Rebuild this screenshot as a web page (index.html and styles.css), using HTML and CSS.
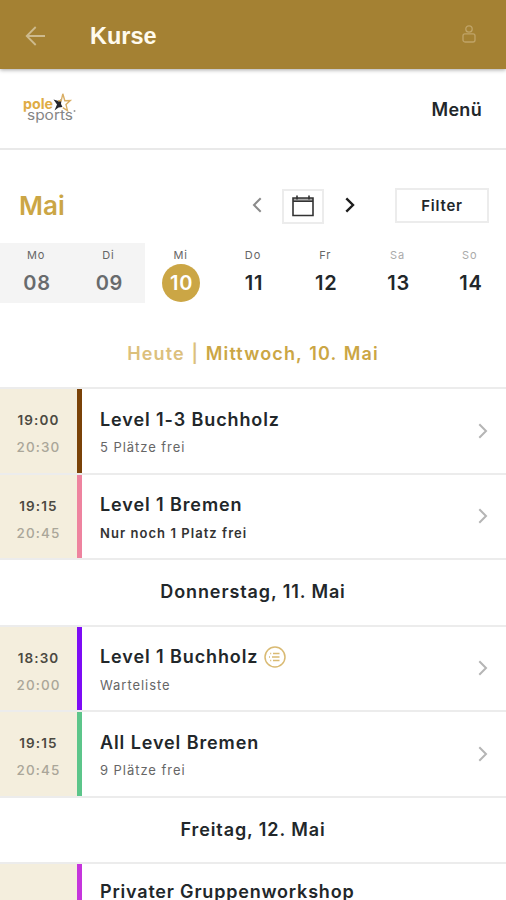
FILE: index.html
```html
<!DOCTYPE html>
<html lang="de">
<head>
    <meta charset="UTF-8">
    <meta name="viewport" content="width=device-width, initial-scale=1.0">
    <title>Kurse</title>
    <link rel="stylesheet" href="styles.css">
</head>
<body>
    <header class="app-bar">
        <svg class="back-icon" viewBox="0 0 20 20"><path d="M19.5 10H1.2M10.2 1L1.2 10l9 9"/></svg>
        <h1>Kurse</h1>
        <svg class="user-icon" viewBox="0 0 14 18"><circle cx="7" cy="4" r="3.2"/><rect x="1" y="8.8" width="12" height="8.2" rx="2"/></svg>
    </header>

    <div class="brand-bar">
        <svg class="logo" viewBox="0 0 54 34">
            <text class="logo-pole" x="0" y="17" textLength="30" lengthAdjust="spacingAndGlyphs">pole</text>
            <path class="star-dark" d="M30.500 7.500l5 1.500 3-2-.500 5 1.500 3-4 .5-4 3 2.500-6z"/>
            <path class="star-gold" d="M35 8.800h3.200l1.600-7 2 7 5.500-.2-4.300 4 1.500 6-4.700-3"/>
            <text class="logo-sports" x="4" y="28" textLength="46" lengthAdjust="spacingAndGlyphs">sports</text>
            <circle class="logo-mark" cx="51.5" cy="19" r="1"/>
        </svg>
        <span class="menu">Menü</span>
    </div>

    <div class="toolbar">
        <h2>Mai</h2>
        <svg class="nav-arrow prev" viewBox="0 0 10 16"><path d="M8.700 1.300L2 8l6.700 6.700"/></svg>
        <div class="calendar-btn">
            <svg viewBox="0 0 22 22"><path class="cal-bar" d="M1 3h20v3H1z"/><path d="M1 3h20v17.500H1zM1 6.300h20M5 .5v4M17 .5v4"/></svg>
        </div>
        <svg class="nav-arrow next" viewBox="0 0 10 16"><path d="M1.300 1.300L8 8l-6.700 6.700"/></svg>
        <div class="filter-btn">Filter</div>
    </div>

    <div class="week">
        <div class="day past"><span>Mo</span><b>08</b></div>
        <div class="day past"><span>Di</span><b>09</b></div>
        <div class="day today"><span>Mi</span><b>10</b></div>
        <div class="day"><span>Do</span><b>11</b></div>
        <div class="day"><span>Fr</span><b>12</b></div>
        <div class="day weekend"><span>Sa</span><b>13</b></div>
        <div class="day weekend"><span>So</span><b>14</b></div>
    </div>

    <h3 class="date-heading current"><span>Heute |</span> Mittwoch, 10. Mai</h3>
    <div class="courses">
        <div class="course brown">
            <div class="time"><b>19:00</b><span>20:30</span></div>
            <div class="info">
                <div class="title">Level 1-3 Buchholz</div>
                <div class="places">5 Plätze frei</div>
            </div>
            <svg class="chevron" viewBox="0 0 10 16"><path d="M1.300 1.300L8 8l-6.700 6.700"/></svg>
        </div>
        <div class="course pink">
            <div class="time"><b>19:15</b><span>20:45</span></div>
            <div class="info">
                <div class="title">Level 1 Bremen</div>
                <div class="places few">Nur noch 1 Platz frei</div>
            </div>
            <svg class="chevron" viewBox="0 0 10 16"><path d="M1.300 1.300L8 8l-6.700 6.700"/></svg>
        </div>
    </div>

    <h3 class="date-heading">Donnerstag, 11. Mai</h3>
    <div class="courses">
        <div class="course violet">
            <div class="time"><b>18:30</b><span>20:00</span></div>
            <div class="info">
                <div class="title">Level 1 Buchholz
                    <svg class="waitlist" viewBox="0 0 22 22"><circle cx="11" cy="11" r="10"/><path d="M9 7.500h6.500M8 11h7.500M9 14.500h6.500M6.200 7.500h1M5 11h1M6.200 14.500h1"/></svg>
                </div>
                <div class="places">Warteliste</div>
            </div>
            <svg class="chevron" viewBox="0 0 10 16"><path d="M1.300 1.300L8 8l-6.700 6.700"/></svg>
        </div>
        <div class="course green">
            <div class="time"><b>19:15</b><span>20:45</span></div>
            <div class="info">
                <div class="title">All Level Bremen</div>
                <div class="places">9 Plätze frei</div>
            </div>
            <svg class="chevron" viewBox="0 0 10 16"><path d="M1.300 1.300L8 8l-6.700 6.700"/></svg>
        </div>
    </div>

    <h3 class="date-heading">Freitag, 12. Mai</h3>
    <div class="courses">
        <div class="course magenta">
            <div class="time"></div>
            <div class="info">
                <div class="title">Privater Gruppenworkshop</div>
            </div>
        </div>
    </div>
</body>
</html>
```
FILE: styles.css
```css
* { margin: 0; padding: 0; box-sizing: border-box; }

body {
    height: 900px;
    overflow: hidden;
    font-family: Inter, sans-serif;
    background: #fff;
    color: #22272a;
}

svg { fill: none; flex: none; }

.app-bar {
    position: relative;
    display: flex;
    align-items: center;
    height: 69px;
    padding: 2px 30px 0 25px;
    background: #a48133;
    box-shadow: 0 1px 4px rgba(0,0,0,0.35);
}

.app-bar h1 {
    flex: 1;
    margin: 1px 0 0 44px;
    font: bold 23.5px "Liberation Sans", sans-serif;
    color: #fffbee;
}

.back-icon { width: 21px; height: 20px; stroke: #cdba8d; stroke-width: 1.8; }
.user-icon { width: 14px; height: 18px; margin-top: -4px; stroke: #c0a468; stroke-width: 1.3; }

.brand-bar {
    display: flex;
    align-items: center;
    justify-content: space-between;
    height: 81px;
    padding: 1px 24px 0 23px;
    border-bottom: 2px solid #e9e9e9;
}

.logo { width: 54px; height: 34px; }
.logo-pole { font: bold 14px Inter, sans-serif; fill: #dfac45; }
.logo-sports { font: 14px Inter, sans-serif; fill: #858585; }
.logo-mark { fill: #999; }
.star-dark { fill: #25252c; }
.star-gold { stroke: #d9ae65; stroke-width: 1.4; }

.menu { margin-top: 1px; font-size: 18px; font-weight: 600; letter-spacing: 0.3px; }

.toolbar {
    display: flex;
    align-items: center;
    height: 93px;
    padding: 17px 17px 0 19px;
}

.toolbar h2 {
    flex: 1;
    font-size: 26px;
    font-weight: 600;
    color: #cba645;
}

.nav-arrow { width: 10px; height: 16px; stroke-width: 2; }
.prev { stroke: #8b8b8b; }
.next { stroke: #1d1d1d; stroke-width: 2.4; margin-right: 40px; }

.calendar-btn {
    display: flex;
    align-items: center;
    justify-content: center;
    width: 42px;
    height: 35px;
    margin: 2px 21px 0 20px;
    border: 2px solid #ececec;
}

.calendar-btn svg { width: 22px; height: 22px; stroke: #333; stroke-width: 1.6; }
.calendar-btn .cal-bar { fill: #aaa; stroke: none; }

.filter-btn {
    width: 94px;
    height: 35px;
    border: 2px solid #ececec;
    font-size: 15px;
    font-weight: 600;
    line-height: 32px;
    letter-spacing: 0.8px;
    text-align: center;
}

.week {
    display: grid;
    grid-template-columns: repeat(7, 1fr);
    height: 60px;
}

.day {
    display: flex;
    flex-direction: column;
    align-items: center;
    padding-top: 5px;
}

.day span {
    font-size: 11px;
    line-height: 15px;
    letter-spacing: 0.9px;
    color: #666;
}

.day b {
    width: 38px;
    height: 38px;
    margin-left: 1px;
    border-radius: 50%;
    font-size: 20px;
    font-weight: 600;
    line-height: 41px;
    letter-spacing: 0.8px;
    text-indent: 1px;
    text-align: center;
}

.past { background: #f4f4f4; }
.past b { color: #686b6d; }
.today b { margin-top: 1px; line-height: 39px; background: #cba645; color: #fff; }
.weekend span { color: #aaa; }

.date-heading {
    height: 64.5px;
    font-size: 18px;
    font-weight: 600;
    line-height: 63px;
    letter-spacing: 0.9px;
    text-align: center;
}

.current { height: 84px; line-height: 102px; letter-spacing: 1.15px; word-spacing: 1px; color: #cba645; }
.current span { color: #dcc07c; }

.courses { border-bottom: 2px solid #ececec; }

.course {
    display: flex;
    align-items: center;
    height: 85.5px;
    padding-right: 18px;
    border-top: 2px solid #ececec;
}

.time {
    display: flex;
    flex-direction: column;
    align-self: stretch;
    width: 82px;
    padding-top: 18px;
    background: #f4eedd;
    border-right: 5px solid;
    text-align: center;
    font-size: 13.5px;
    line-height: 27px;
    letter-spacing: 1.1px;
}

.time b { font-weight: 600; color: #4b4941; }
.time span { font-weight: 500; color: #aaa699; }

.brown .time { border-color: #7a4208; }
.pink .time { border-color: #ee839f; }
.violet .time { border-color: #7d0cf5; }
.green .time { border-color: #5cc58a; }
.magenta .time { border-color: #c535dc; }

.info { flex: 1; align-self: stretch; padding: 16px 0 0 18px; }

.title {
    display: flex;
    align-items: center;
    gap: 6px;
    height: 28px;
    font-size: 18px;
    font-weight: 600;
    letter-spacing: 0.9px;
    white-space: nowrap;
}

.waitlist { width: 22px; height: 22px; stroke: #d9ba73; stroke-width: 1.5; }

.places {
    font-size: 13px;
    line-height: 28px;
    letter-spacing: 0.95px;
    color: #666;
}

.few { font-weight: 600; letter-spacing: 1.05px; color: #333; }

.magenta .info { padding-top: 13px; }
.magenta .title { letter-spacing: 0.8px; }

.chevron { width: 10px; height: 16px; stroke: #b5b5b5; stroke-width: 2; }
```
